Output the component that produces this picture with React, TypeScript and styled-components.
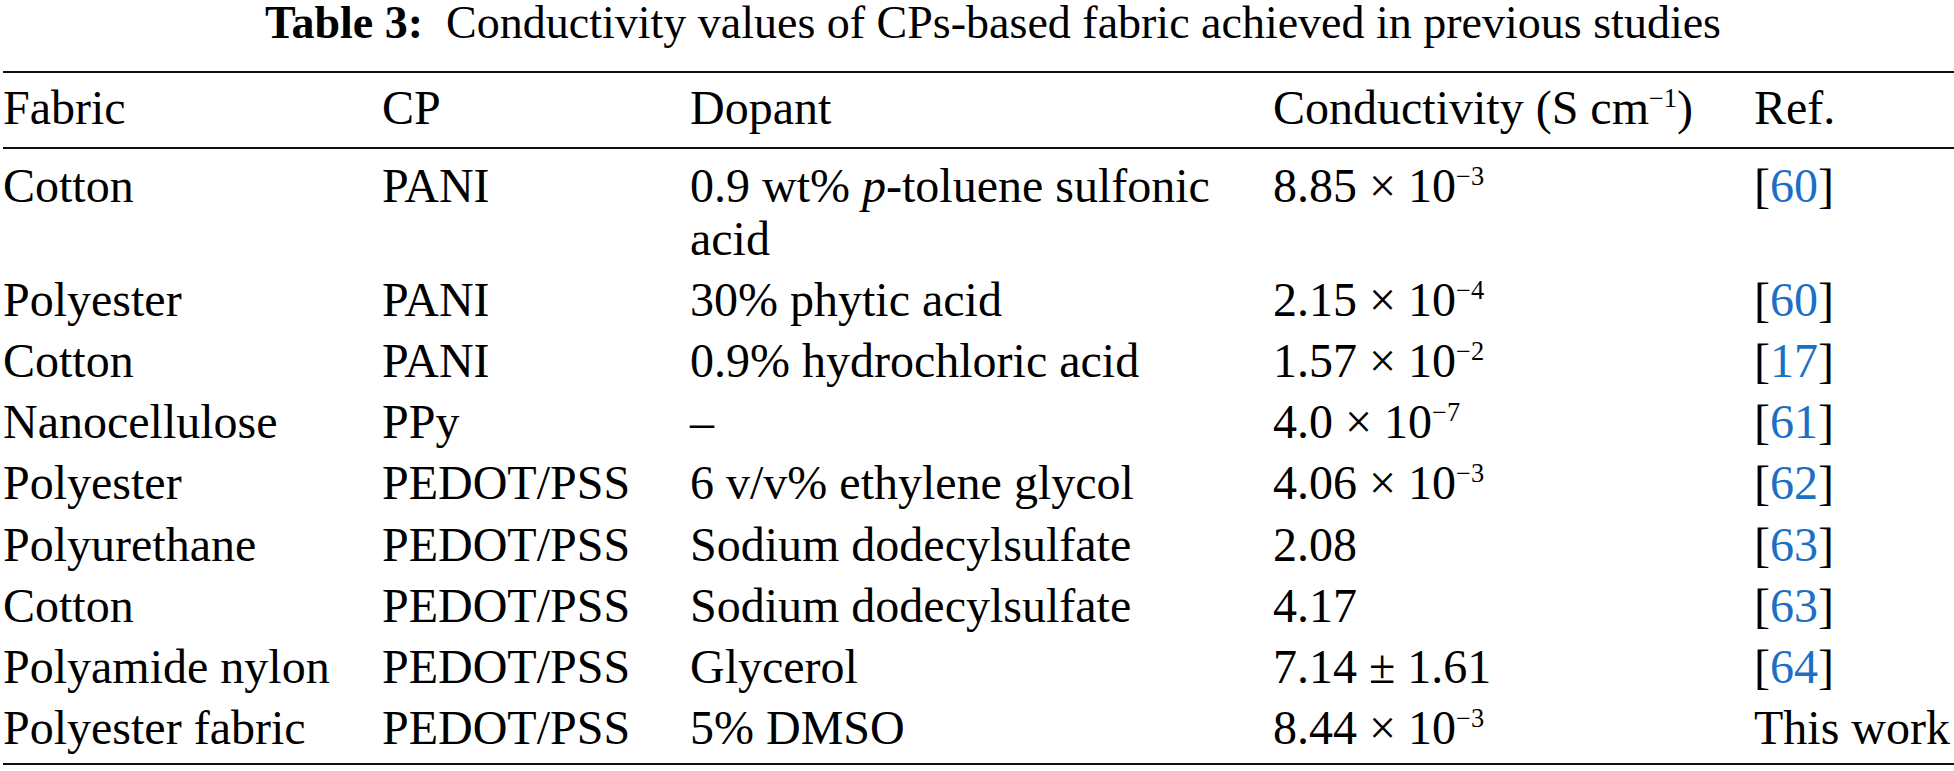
import type { ReactNode } from 'react';
import styled, { createGlobalStyle } from 'styled-components';

const GlobalStyle = createGlobalStyle`
  html,
  body {
    margin: 0;
    padding: 0;
    background: #ffffff;
    overflow: hidden;
  }
  body {
    font-family: 'Liberation Serif', 'Times New Roman', serif;
    color: #000000;
  }
`;

const Page = styled.div`
  width: 1954px;
  height: 771px;
  padding-left: 3px;
  box-sizing: border-box;
`;

const Caption = styled.div`
  height: 46px;
  line-height: 46px;
  font-size: 46px;
  text-align: center;
  white-space: nowrap;
  margin: 0 0 25px 29px;
`;

const CaptionLabel = styled.b`
  font-weight: 700;
  margin-right: 0.5em;
`;

const Table = styled.table`
  width: 1951px;
  table-layout: fixed;
  border-collapse: separate;
  border-spacing: 0;
  font-size: 48px;
  line-height: 52.8px;
`;

const Col = styled.col<{ $width: number }>`
  width: ${({ $width }) => $width}px;
`;

const HeadCell = styled.th`
  text-align: left;
  font-weight: 400;
  vertical-align: top;
  padding: 9px 0 12px;
  border-top: 2px solid #111111;
  border-bottom: 2px solid #111111;
  white-space: nowrap;
`;

type RowPos = 'first' | 'mid' | 'last';

const Cell = styled.td<{ $pos: RowPos; $nowrap?: boolean }>`
  vertical-align: top;
  padding: ${({ $pos }) => ($pos === 'first' ? '11px 0 4.5px' : $pos === 'last' ? '4px 0 8px' : '4px 0 4.4px')};
  border-bottom: ${({ $pos }) => ($pos === 'last' ? '2px solid #111111' : 'none')};
  white-space: ${({ $nowrap }) => ($nowrap ? 'nowrap' : 'normal')};
`;

const Sup = styled.sup`
  font-size: 0.55em;
  line-height: 0;
  vertical-align: 0.64em;
`;

const RefLink = styled.span`
  color: #1d6fc6;
`;

interface Row {
  fabric: string;
  cp: string;
  dopant: ReactNode;
  value: ReactNode;
  refNo?: string;
}

const Pow = ({ base, exp }: { base: string; exp: string }) => (
  <>
    {base} × 10<Sup>{exp}</Sup>
  </>
);

const rows: Row[] = [
  {
    fabric: 'Cotton',
    cp: 'PANI',
    dopant: (
      <>
        0.9 wt% <i>p</i>-toluene sulfonic acid
      </>
    ),
    value: <Pow base="8.85" exp="−3" />,
    refNo: '60',
  },
  { fabric: 'Polyester', cp: 'PANI', dopant: '30% phytic acid', value: <Pow base="2.15" exp="−4" />, refNo: '60' },
  { fabric: 'Cotton', cp: 'PANI', dopant: '0.9% hydrochloric acid', value: <Pow base="1.57" exp="−2" />, refNo: '17' },
  { fabric: 'Nanocellulose', cp: 'PPy', dopant: '–', value: <Pow base="4.0" exp="−7" />, refNo: '61' },
  {
    fabric: 'Polyester',
    cp: 'PEDOT/PSS',
    dopant: '6 v/v% ethylene glycol',
    value: <Pow base="4.06" exp="−3" />,
    refNo: '62',
  },
  { fabric: 'Polyurethane', cp: 'PEDOT/PSS', dopant: 'Sodium dodecylsulfate', value: '2.08', refNo: '63' },
  { fabric: 'Cotton', cp: 'PEDOT/PSS', dopant: 'Sodium dodecylsulfate', value: '4.17', refNo: '63' },
  { fabric: 'Polyamide nylon', cp: 'PEDOT/PSS', dopant: 'Glycerol', value: '7.14 ± 1.61', refNo: '64' },
  { fabric: 'Polyester fabric', cp: 'PEDOT/PSS', dopant: '5% DMSO', value: <Pow base="8.44" exp="−3" /> },
];

const columns = [379, 308, 583, 481, 200];

const App = () => {
  return (
    <Page>
      <GlobalStyle />
      <Caption>
        <CaptionLabel>Table 3:</CaptionLabel>
        Conductivity values of CPs-based fabric achieved in previous studies
      </Caption>
      <Table>
        <colgroup>
          {columns.map((w, i) => (
            <Col key={i} $width={w} />
          ))}
        </colgroup>
        <thead>
          <tr>
            <HeadCell>Fabric</HeadCell>
            <HeadCell>CP</HeadCell>
            <HeadCell>Dopant</HeadCell>
            <HeadCell>
              Conductivity (S cm<Sup>−1</Sup>)
            </HeadCell>
            <HeadCell>Ref.</HeadCell>
          </tr>
        </thead>
        <tbody>
          {rows.map((row, i) => {
            const pos: RowPos = i === 0 ? 'first' : i === rows.length - 1 ? 'last' : 'mid';
            return (
              <tr key={i}>
                <Cell $pos={pos}>{row.fabric}</Cell>
                <Cell $pos={pos}>{row.cp}</Cell>
                <Cell $pos={pos}>{row.dopant}</Cell>
                <Cell $pos={pos}>{row.value}</Cell>
                <Cell $pos={pos} $nowrap>
                  {row.refNo ? (
                    <>
                      [<RefLink>{row.refNo}</RefLink>]
                    </>
                  ) : (
                    'This work'
                  )}
                </Cell>
              </tr>
            );
          })}
        </tbody>
      </Table>
    </Page>
  );
};

export default App;
